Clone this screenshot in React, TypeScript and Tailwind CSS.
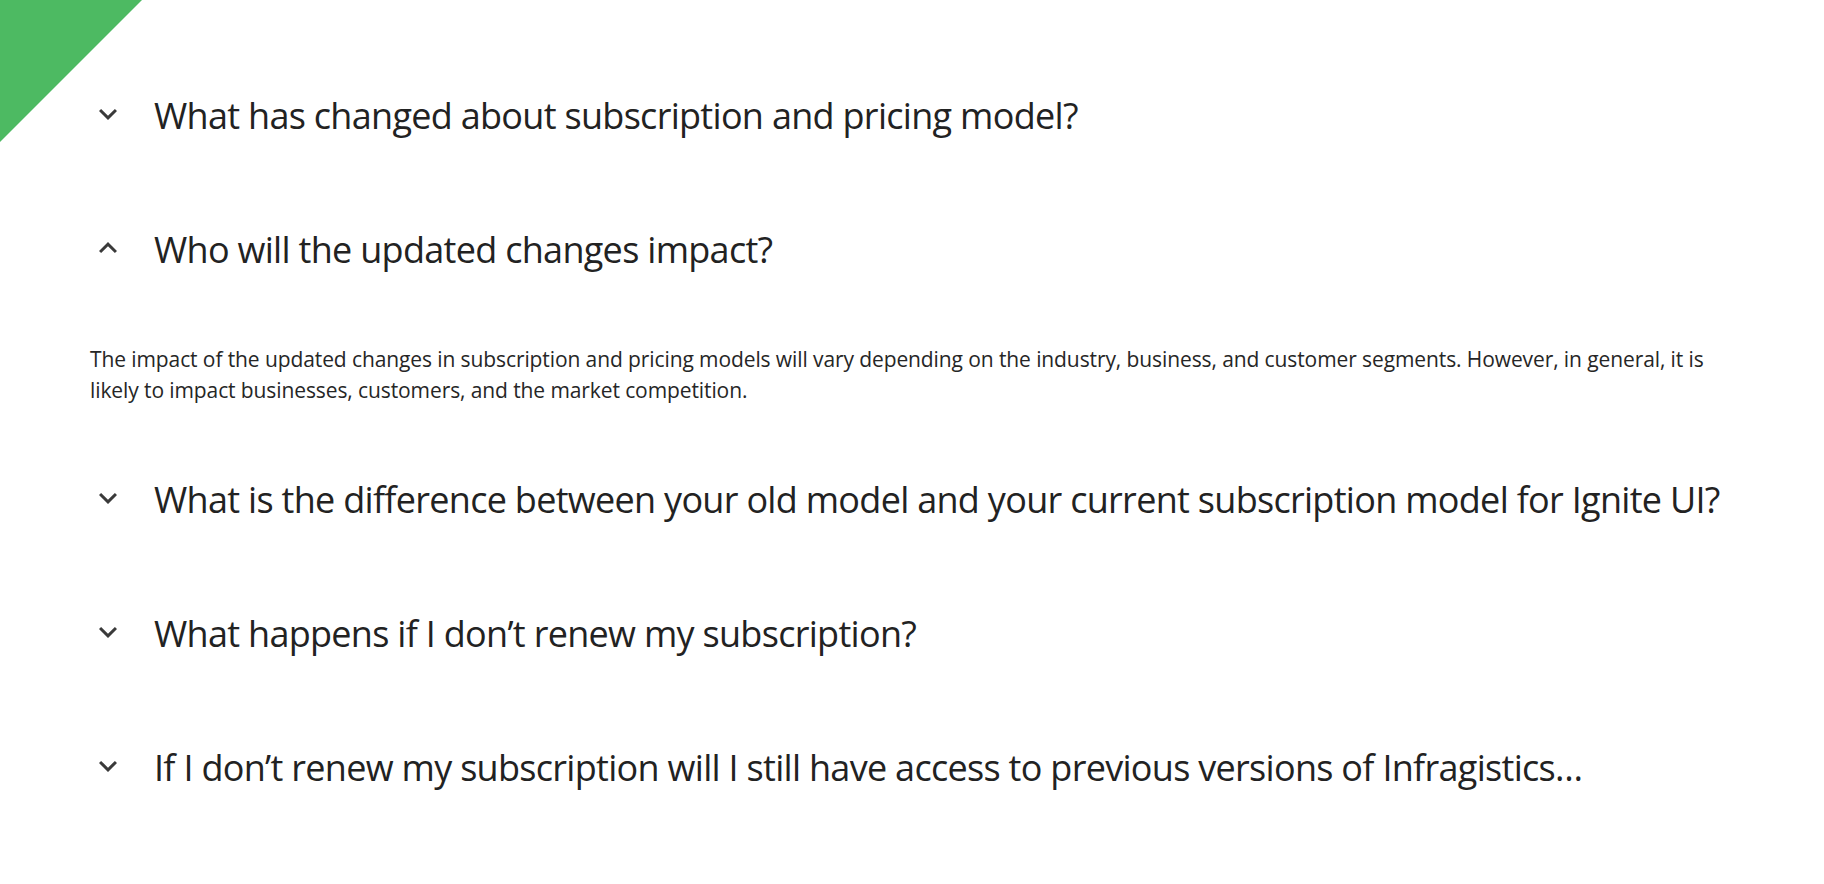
const faqs = [
  { q: "What has changed about subscription and pricing model?", open: false },
  {
    q: "Who will the updated changes impact?",
    open: true,
    a: "The impact of the updated changes in subscription and pricing models will vary depending on the industry, business, and customer segments. However, in general, it is likely to impact businesses, customers, and the market competition.",
  },
  { q: "What is the difference between your old model and your current subscription model for Ignite UI?", open: false },
  { q: "What happens if I don’t renew my subscription?", open: false },
  { q: "If I don’t renew my subscription will I still have access to previous versions of Infragistics…", open: false },
];

function Chevron({ up }: { up: boolean }) {
  return (
    <svg viewBox="0 0 24 24" className="w-9 h-9 shrink-0 fill-[#3a3a3a] -translate-y-[2px]">
      {up ? (
        <path d="M12 8l-6 6 1.41 1.41L12 10.83l4.59 4.58L18 14z" />
      ) : (
        <path d="M16.59 8.59L12 13.17 7.41 8.59 6 10l6 6 6-6z" />
      )}
    </svg>
  );
}

export default function App() {
  return (
    <main className="relative min-h-screen bg-white font-['Open_Sans',sans-serif] text-[#222]">
      {/* corner decoration */}
      <div className="absolute top-0 left-0 w-[142px] h-[142px] bg-[#4dba62] [clip-path:polygon(0_0,100%_0,0_100%)]" />

      <div className="px-[90px] pt-[49px]">
        {faqs.map((f) => (
          <section key={f.q}>
            <div className="flex items-center gap-[28px] h-[134px]">
              <Chevron up={f.open} />
              <h3 className="text-[36px] font-normal tracking-[-0.7px] leading-none whitespace-nowrap">{f.q}</h3>
            </div>
            {f.open && (
              <p className="pt-[27px] pb-[27px] text-[21px] leading-[31px] font-normal tracking-[-0.1px] text-[#262626]">
                {f.a}
              </p>
            )}
          </section>
        ))}
      </div>
    </main>
  );
}
